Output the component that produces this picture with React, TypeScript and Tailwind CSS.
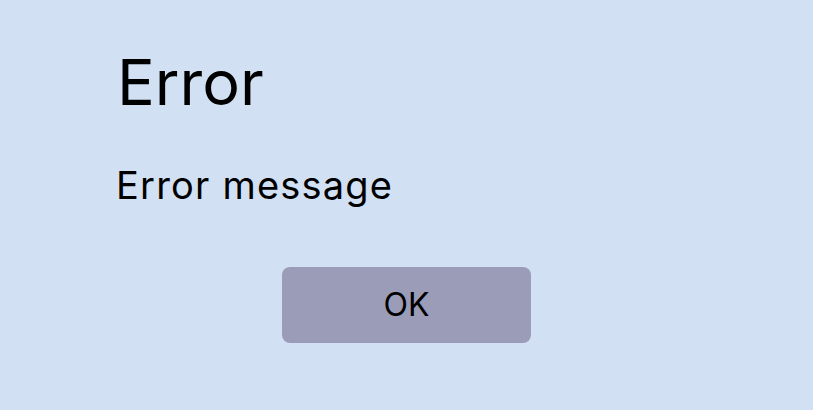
export default function App() {
  return (
    <div className="w-[813px] h-[410px] bg-[#d1e0f3] text-black font-['Inter',_'Liberation_Sans',_sans-serif] flex flex-col">
      <h1 className="ml-[117px] mt-[51px] text-[63px] leading-none font-normal">Error</h1>
      <p className="ml-[116px] mt-[52px] text-[38px] leading-none tracking-[1.2px]">Error message</p>
      <button className="self-center mt-[63px] w-[249px] h-[76px] rounded-[8px] bg-[#9b9db8] text-[32px] text-black">
        OK
      </button>
    </div>
  );
}
